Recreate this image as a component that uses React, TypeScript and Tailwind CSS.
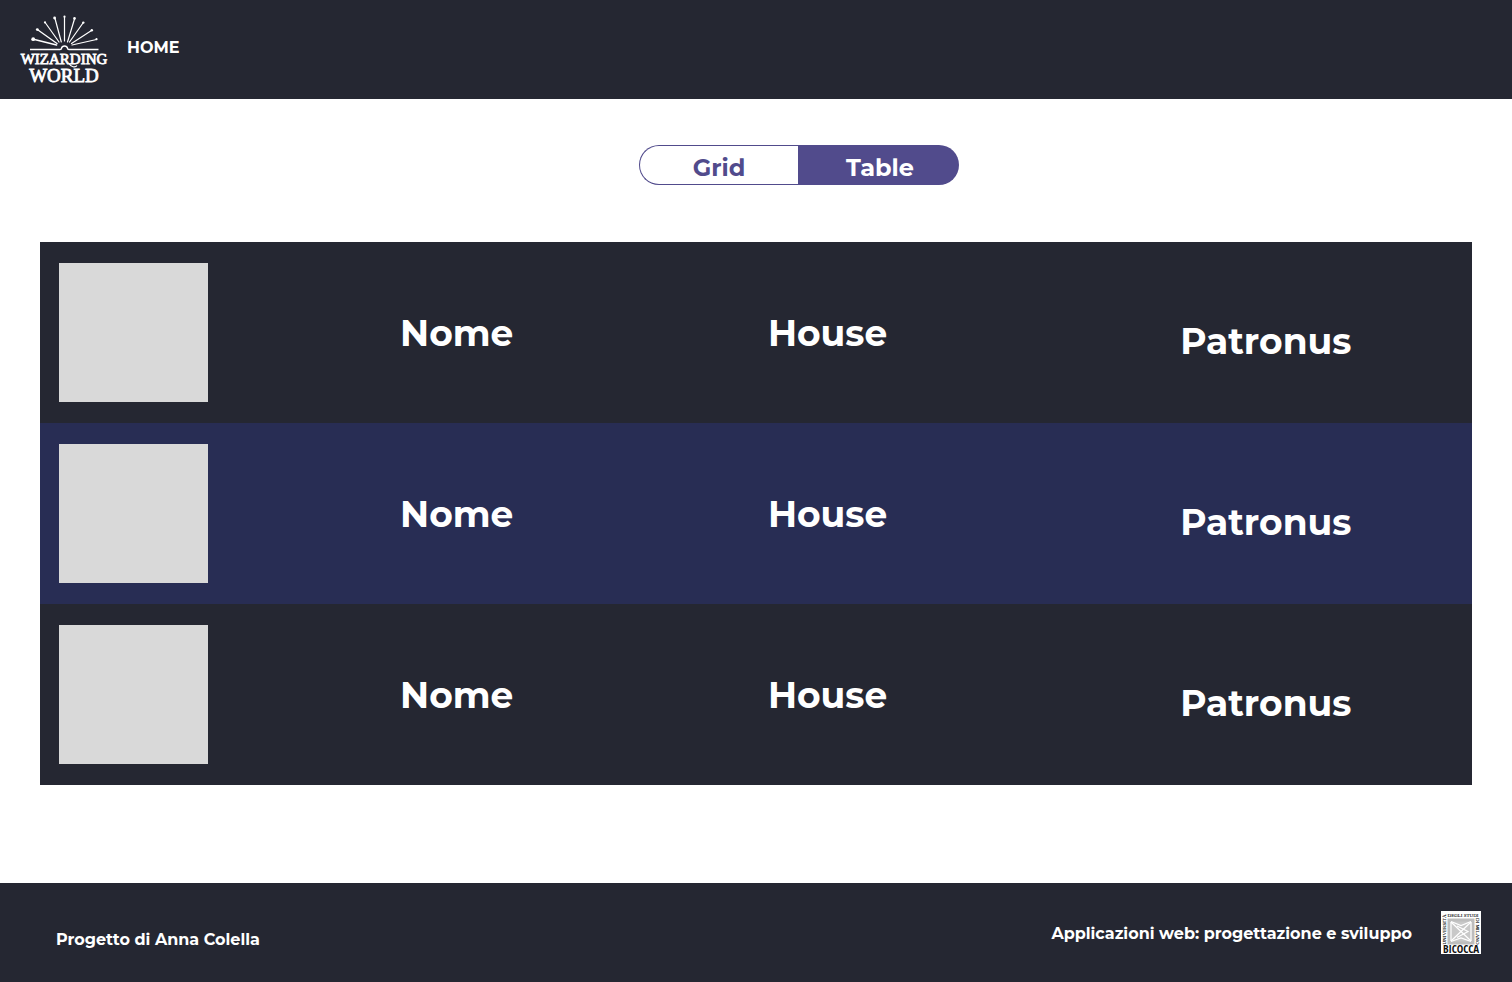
type Character = { name: string; house: string; patronus: string };

const characters: Character[] = [
  { name: "Nome", house: "House", patronus: "Patronus" },
  { name: "Nome", house: "House", patronus: "Patronus" },
  { name: "Nome", house: "House", patronus: "Patronus" },
];

function WizardingWorldLogo() {
  return (
    <svg width="90" height="76" viewBox="0 0 90 76" fill="#fff" stroke="#fff" role="img" aria-label="Wizarding World">
      <g strokeLinecap="round" strokeWidth="1.2">
        <path d="M37.5 30 L15.5 24.5" strokeWidth="1.5" />
        <path d="M38 28.5 L19 15" strokeWidth="1.4" />
        <path d="M40 27 L26.5 8" />
        <path d="M42.3 27 L36 3.5" />
        <path d="M45.5 26 V2" />
        <path d="M48.5 27 L55.5 4" />
        <path d="M50.5 27 L64 8" />
        <path d="M52.5 28.5 L72.5 15.5" />
        <path d="M53 30 L77.5 24.5" />
      </g>
      <g stroke="none">
        <circle cx="14.2" cy="24.2" r="1.9" />
        <circle cx="18.3" cy="14.6" r="1.4" />
        <circle cx="26" cy="7.4" r="1.1" />
        <circle cx="35.6" cy="3" r="1.4" />
        <circle cx="45.5" cy="1.7" r="1.1" />
        <circle cx="55.5" cy="3.4" r="1.3" />
        <circle cx="64.3" cy="7.6" r="1.2" />
        <circle cx="72.8" cy="15.2" r="1.2" />
        <circle cx="77.5" cy="24.2" r="1.1" />
      </g>
      <path d="M11 34.4 H41 C42 34.4 42.4 33.8 42.4 33.4 A3.2 3.2 0 0 1 48.6 33.4 C48.6 33.8 49 34.4 50 34.4 H79.5" fill="none" strokeWidth="1.5" />
      <g textAnchor="middle" strokeWidth="0.8" fontFamily="'Liberation Serif', serif" fontWeight="400">
        <text x="45" y="49" fontSize="15">
          WIZARDING
        </text>
        <text x="45" y="67" fontSize="19">
          WORLD
        </text>
      </g>
      <path d="M50 48.5 C51.5 51.8 56.5 53 58 50.5" fill="none" strokeWidth="1.1" />
    </svg>
  );
}

function BicoccaLogo() {
  return (
    <svg className="overflow-visible" width="40" height="43" viewBox="0 0 40 43" role="img" aria-label="Università degli Studi di Milano Bicocca">
      <rect width="40" height="43" fill="#fff" />
      <rect x="6.5" y="7.5" width="27" height="26" fill="#bdbdbd" />
      <rect x="9.5" y="10.5" width="21" height="20" fill="#c8c8c8" />
      <g fill="none" stroke="#fff" strokeWidth="1.2">
        <path d="M10 11 L30 30 M10 30 L30 11" />
        <path d="M10 10.5 L20 14.5 L30 10.5 M10 30.5 L20 27 L30 30.5" />
        <path d="M10 11 V30 M30 11 V30" />
        <path d="M16 15 L27 20.5 L16 26.5" />
      </g>
      <g fill="#111" stroke="#111" strokeWidth="0.1" fontFamily="'Liberation Serif', serif" fontSize="5" fontWeight="400">
        <text x="22" y="6" textAnchor="middle">DEGLI STUDI</text>
        <text transform="translate(5 33.5) rotate(-90)">UNIVERSITÀ</text>
        <text transform="translate(35 7) rotate(90)">DI MILANO</text>
      </g>
      <text x="20" y="42" textAnchor="middle" fill="#111" fontFamily="'Liberation Sans Narrow', 'Open Sans Condensed', 'DejaVu Sans Condensed', sans-serif" fontSize="11" fontWeight="700">
        BICOCCA
      </text>
    </svg>
  );
}

function Header() {
  return (
    <header className="flex h-[99px] items-start gap-[18px] bg-[#252732] px-[19px] pt-[15px] text-white">
      <a href="#home">
        <WizardingWorldLogo />
      </a>
      <nav className="pt-[21px]">
        <a href="#home" className="block text-base leading-6 font-bold">
          HOME
        </a>
      </nav>
    </header>
  );
}

function ViewToggle() {
  return (
    <div className="flex justify-center pl-[86px]">
      <div className="flex h-10 w-80 text-2xl leading-8 font-bold">
        <button type="button" aria-pressed="false" className="flex-1 rounded-l-full border border-r-0 border-[#514b8c] bg-white pt-[6px] text-[#514b8c]">
          Grid
        </button>
        <button type="button" aria-pressed="true" className="w-[161px] rounded-r-full bg-[#514b8c] pt-[6px] pl-[3px] text-white">
          Table
        </button>
      </div>
    </div>
  );
}

function CharacterTable({ rows }: { rows: Character[] }) {
  return (
    <table className="w-full table-fixed border-collapse text-center text-4xl font-bold text-white">
      <colgroup>
        <col className="w-[19.4%]" />
        <col className="w-[19.4%]" />
        <col className="w-[32.4%]" />
        <col className="w-[28.8%]" />
      </colgroup>
      <tbody>
        {rows.map((row, i) => (
          <tr key={i} className="bg-[#252732] even:bg-[#282d54]">
            <td className="py-[21px] pl-[19px]">
              <div className="h-[139px] w-[149px] bg-[#d9d9d9]" />
            </td>
            <td>{row.name}</td>
            <td>{row.house}</td>
            <td className="pt-4">{row.patronus}</td>
          </tr>
        ))}
      </tbody>
    </table>
  );
}

function Footer() {
  return (
    <footer className="flex h-[99px] items-start justify-between bg-[#252732] pt-7 pr-[31px] pl-14 text-base leading-6 font-bold text-white">
      <p className="pt-[17px]">Progetto di Anna Colella</p>
      <div className="flex gap-[29px]">
        <p className="pt-[11px]">Applicazioni web: progettazione e sviluppo</p>
        <BicoccaLogo />
      </div>
    </footer>
  );
}

export default function App() {
  return (
    <div className="flex min-h-screen flex-col bg-white font-[Montserrat,Inter,sans-serif]">
      <Header />
      <main className="flex flex-1 flex-col gap-[57px] px-10 pt-[46px] pb-12">
        <ViewToggle />
        <CharacterTable rows={characters} />
      </main>
      <Footer />
    </div>
  );
}
